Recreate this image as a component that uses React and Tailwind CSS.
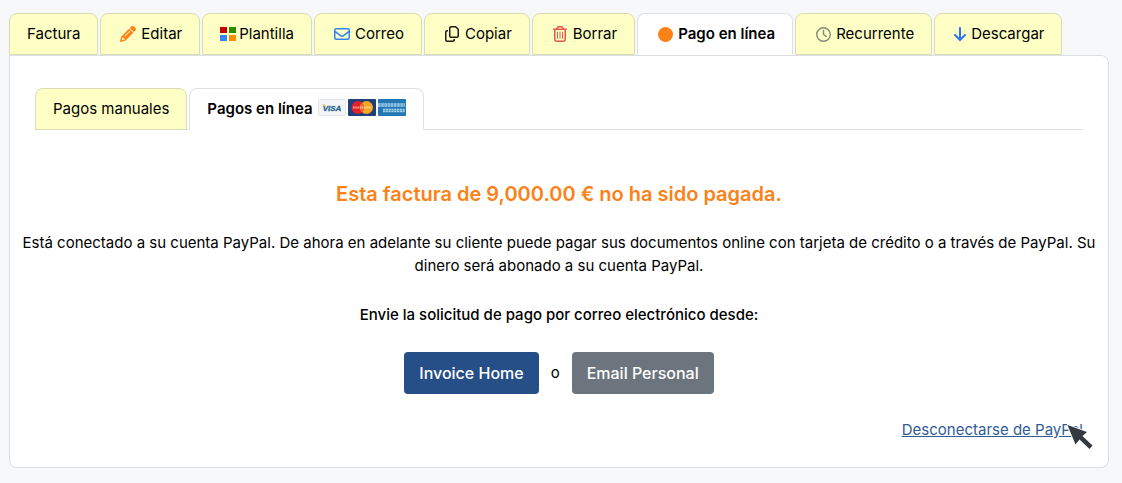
import React from "react";
import {
  FaPencil,
  FaRegEnvelope,
  FaRegCopy,
  FaRegTrashCan,
  FaCircle,
  FaRegClock,
  FaArrowDown,
} from "react-icons/fa6";

const TemplateIcon = () => (
  <svg className="w-4 h-4 shrink-0" viewBox="0 0 16 16" aria-hidden="true">
    <rect x="0" y="1" width="7" height="6" fill="#c50000" />
    <rect x="9" y="1" width="7" height="6" fill="#2a8c00" />
    <rect x="0" y="9" width="7" height="6" fill="#3385ff" />
    <rect x="9" y="9" width="7" height="6" fill="#ff8a00" />
  </svg>
);

const VisaCard = () => (
  <svg className="w-7 h-[17px]" viewBox="0 0 28 17" role="img" aria-label="Visa">
    <rect x="0.5" y="0.5" width="27" height="16" rx="1" fill="#f4f5f7" stroke="#e3e5e8" />
    <text
      x="14"
      y="12"
      textAnchor="middle"
      fontFamily="Liberation Sans, sans-serif"
      fontSize="8"
      fontWeight="700"
      fontStyle="italic"
      fill="#1f6596"
      stroke="#1f6596"
      strokeWidth="0.3"
    >
      VISA
    </text>
    <path d="M4 5.5h3l1 3z" fill="#e3b53c" />
  </svg>
);

const MasterCard = () => (
  <svg className="w-7 h-[17px]" viewBox="0 0 28 17" role="img" aria-label="MasterCard">
    <rect width="28" height="17" rx="1" fill="#20407a" />
    <circle cx="10" cy="8.5" r="6.5" fill="#e3202b" />
    <circle cx="18.5" cy="8.5" r="6.5" fill="#f6a823" />
    <path d="M14.2 3.6a6.5 6.5 0 0 1 0 9.800a6.5 6.5 0 0 1 0-9.800" fill="#ee6a25" />
    <path d="M5 8.5h18" stroke="#f7dfc0" strokeWidth="2" strokeDasharray="1.5 0.7" opacity="0.7" />
  </svg>
);

const AmexCard = () => (
  <svg className="w-7 h-[17px]" viewBox="0 0 28 17" role="img" aria-label="American Express">
    <rect width="28" height="17" rx="1" fill="#2377b4" />
    <path d="M0 6h27" stroke="#a9d3e9" strokeWidth="3.4" strokeDasharray="2.6 0.6" />
    <path d="M5 11.5h22" stroke="#a9d3e9" strokeWidth="3.4" strokeDasharray="2.2 0.6" />
    <path d="M0 6h27M5 11.5h22" stroke="#4f9ac8" strokeWidth="0.7" />
  </svg>
);

const Cursor = () => (
  <svg
    className="absolute top-1 -right-3 w-7 h-8 pointer-events-none"
    viewBox="0 0 28 32"
    aria-hidden="true"
  >
    <path
      d="M0.5 3L20 10L15.5 14L25.5 23.5L22.5 27L12.5 17.5L8.5 22.5Z"
      fill="#343a40"
      stroke="#fff"
      strokeWidth="2"
      paintOrder="stroke"
    />
  </svg>
);

const tabs = [
  { label: "Factura" },
  { label: "Editar", icon: <FaPencil className="w-4 h-4 text-[#fa8219]" /> },
  { label: "Plantilla", icon: <TemplateIcon />, narrow: true },
  { label: "Correo", icon: <FaRegEnvelope className="w-4 h-4 text-[#3385f5]" /> },
  { label: "Copiar", icon: <FaRegCopy className="w-3.5 h-4 text-[#1c1c14]" /> },
  { label: "Borrar", icon: <FaRegTrashCan className="w-3.5 h-4 text-[#e8574e]" /> },
  { label: "Pago en línea", icon: <FaCircle className="w-[15px] h-[15px] text-[#fa8219]" />, active: true },
  { label: "Recurrente", icon: <FaRegClock className="w-[15px] h-[15px] text-[#85897d]" /> },
  { label: "Descargar", icon: <FaArrowDown className="w-4 h-4 text-[#2f73f6]" />, narrow: true },
];

const Tab = ({ active, children }) => (
  <button
    type="button"
    role="tab"
    aria-selected={!!active}
    className={`flex h-[42px] shrink-0 items-center gap-[3px] whitespace-nowrap rounded-t-lg border px-[17px] ${
      active
        ? "border-[#dee2e6] border-b-white bg-white font-semibold"
        : "border-[#dcdcb4] bg-[#feffc5]"
    }`}
  >
    {children}
  </button>
);

const App = () => {
  return (
    <div className="min-h-screen bg-[#f6f8fa] pt-[13px] pr-[13px] pb-[14px] pl-[9px] font-['Inter',sans-serif] text-[15px] text-black">
      {/* Invoice tabs */}
      <div role="tablist" className="flex gap-0.5">
        {tabs.map((tab) => (
          <Tab key={tab.label} active={tab.active}>
            {tab.icon && (
              <span className={`flex justify-center ${tab.narrow ? "w-4" : "w-5"}`}>
                {tab.icon}
              </span>
            )}
            <span>{tab.label}</span>
          </Tab>
        ))}
      </div>

      <main className="rounded-b-lg rounded-tr-lg border border-[#dcdfe2] bg-white px-[25px] pt-8 pb-[26px]">
        {/* Payment type tabs */}
        <div role="tablist" className="flex gap-0.5 border-b border-[#dee2e6]">
          <div className="-mb-px">
            <Tab>Pagos manuales</Tab>
          </div>
          <div className="-mb-px">
            <Tab active>
              <span>Pagos en línea</span>
              <span className="mb-1 ml-0.5 flex gap-0.5">
                <VisaCard />
                <MasterCard />
                <AmexCard />
              </span>
            </Tab>
          </div>
        </div>

        <div className="text-center">
          <h1 className="mt-12 text-xl leading-8 font-semibold text-[#fa8219]">
            Esta factura de 9,000.00 € no ha sido pagada.
          </h1>
          <p className="-mx-4 mt-[21px] leading-[23px]">
            Está conectado a su cuenta PayPal. De ahora en adelante su cliente puede pagar sus
            documentos online con tarjeta de crédito o a través de PayPal. Su dinero será abonado a
            su cuenta PayPal.
          </p>
          <p className="mt-[26px] leading-[23px] font-medium">
            Envie la solicitud de pago por correo electrónico desde:
          </p>
          <div className="mt-[26px] flex items-center justify-center gap-3">
            <button
              type="button"
              className="h-[42px] rounded bg-[#264f87] px-[15px] text-base font-medium text-white"
            >
              Invoice Home
            </button>
            <span>o</span>
            <button
              type="button"
              className="h-[42px] rounded bg-[#6c757d] px-[15px] text-base font-medium text-white"
            >
              Email Personal
            </button>
          </div>
        </div>

        <div className="mt-6 flex justify-end">
          <div className="relative leading-[23px]">
            <a href="#" className="text-[#315c98] underline">
              Desconectarse de PayPal
            </a>
            <Cursor />
          </div>
        </div>
      </main>
    </div>
  );
};

export default App;
